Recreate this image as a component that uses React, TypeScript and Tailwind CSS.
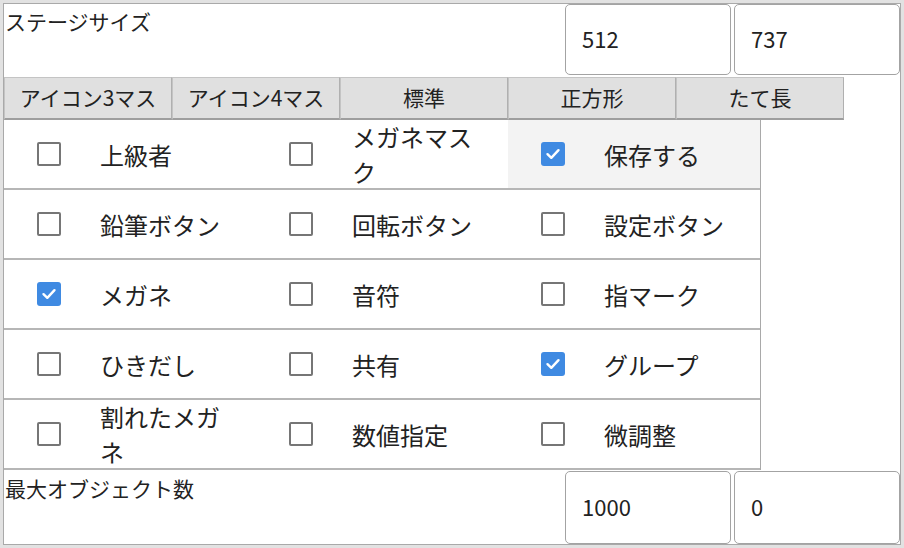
import React from "react";

type Item = { label: string; checked: boolean; hover?: boolean };

const rows: Item[][] = [
  [
    { label: "上級者", checked: false },
    { label: "メガネマスク", checked: false },
    { label: "保存する", checked: true, hover: true },
  ],
  [
    { label: "鉛筆ボタン", checked: false },
    { label: "回転ボタン", checked: false },
    { label: "設定ボタン", checked: false },
  ],
  [
    { label: "メガネ", checked: true },
    { label: "音符", checked: false },
    { label: "指マーク", checked: false },
  ],
  [
    { label: "ひきだし", checked: false },
    { label: "共有", checked: false },
    { label: "グループ", checked: true },
  ],
  [
    { label: "割れたメガネ", checked: false },
    { label: "数値指定", checked: false },
    { label: "微調整", checked: false },
  ],
];

function Box({ checked }: { checked: boolean }) {
  if (checked) {
    return (
      <div className="w-[24px] h-[24px] rounded-[3px] bg-[#3f8ae2] flex items-center justify-center">
        <svg width="18" height="18" viewBox="0 0 18 18">
          <path d="M3.5 9.2 L7.3 12.8 L14.5 5.2" fill="none" stroke="#ffffff" strokeWidth="2.4" strokeLinecap="round" strokeLinejoin="round" />
        </svg>
      </div>
    );
  }
  return <div className="w-[24px] h-[24px] rounded-[2px] border-[2.5px] border-[#767676] bg-white" />;
}

const font = { fontFamily: '"Noto Sans CJK JP", "Noto Sans", sans-serif' };

export default function App() {
  return (
    <div className="w-[904px] h-[548px] bg-[#e2e2e2] p-[3px] text-[#222]" style={font}>
      <div className="w-full h-full bg-white border border-[#a9a9a9] flex flex-col">
        <div className="h-[73px] flex justify-between">
          <div className="text-[21px] leading-[24px] pl-[1px] pt-[5px]">ステージサイズ</div>
          <div className="flex gap-[3px] h-[71px]">
            <div className="w-[166px] h-full border border-[#a3a3a3] rounded-[5px] flex items-center pl-[16px] pb-[3px] text-[22px]">512</div>
            <div className="w-[166px] h-full border border-[#a3a3a3] rounded-[5px] flex items-center pl-[16px] pb-[3px] text-[22px]">737</div>
          </div>
        </div>
        <div className="h-[43px] flex">
          {["アイコン3マス", "アイコン4マス", "標準", "正方形", "たて長"].map((t) => (
            <div
              key={t}
              className="w-[168px] h-full bg-[#e0e0e0] border border-[#c4c4c4] border-b-[2px] border-b-[#9e9e9e] border-r-[#b0b0b0] flex items-center justify-center text-[21px]"
            >
              {t}
            </div>
          ))}
        </div>
        <div className="w-[757px] border-r border-[#a9a9a9]">
          {rows.map((row, i) => (
            <div key={i} className="h-[70px] flex border-b-2 border-[#b6b6b6]">
              {row.map((it) => (
                <div key={it.label} className={`w-[252px] flex items-center ${it.hover ? "bg-[#f3f3f3]" : ""}`}>
                  <div className="w-[96px] flex justify-center pr-[7px]">
                    <Box checked={it.checked} />
                  </div>
                  <div className="w-[132px] text-[24px] leading-[35px]">{it.label}</div>
                </div>
              ))}
            </div>
          ))}
        </div>
        <div className="flex-1 flex justify-between pt-[1px]">
          <div className="text-[21px] leading-[24px] pl-[1px] pt-[6px] -mt-[1px]">最大オブジェクト数</div>
          <div className="flex gap-[3px] h-[73px]">
            <div className="w-[166px] h-full border border-[#a3a3a3] rounded-[5px] flex items-center pl-[16px] pb-[3px] text-[22px]">1000</div>
            <div className="w-[166px] h-full border border-[#a3a3a3] rounded-[5px] flex items-center pl-[16px] pb-[3px] text-[22px]">0</div>
          </div>
        </div>
      </div>
    </div>
  );
}
